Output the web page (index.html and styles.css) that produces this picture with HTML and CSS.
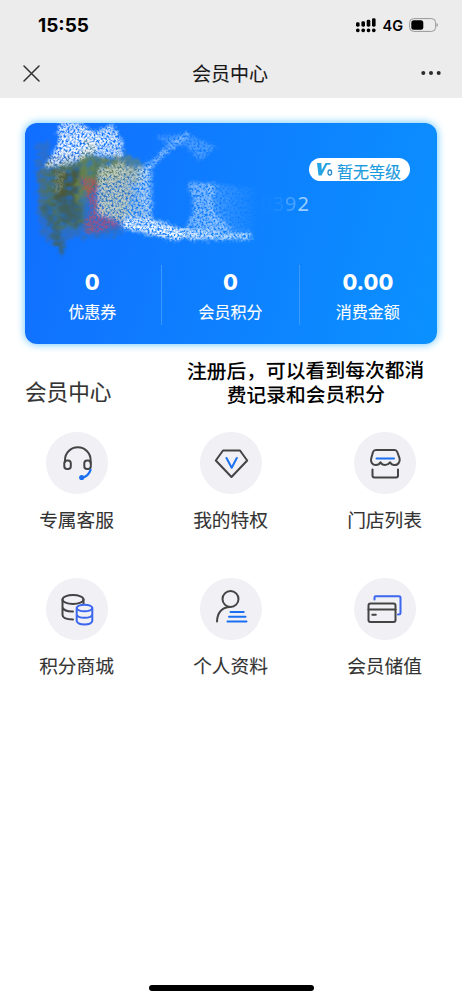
FILE: index.html
```html
<!DOCTYPE html>
<html lang="zh-CN">
<head>
<meta charset="utf-8">
<title>会员中心</title>
<link rel="stylesheet" href="styles.css">
</head>
<body>
<header class="top">
  <div class="status">
    <span class="time">15:55</span>
    <div class="status-right">
      <svg class="signal" width="20" height="15" viewBox="0 0 20 15">
        <g fill="#000"><rect x="0" y="4.3" width="3.6" height="4.4" rx="1.4"/><rect x="5.4" y="3.2" width="3.6" height="5.5" rx="1.4"/><rect x="10.7" y="1.8" width="3.6" height="6.9" rx="1.4"/><rect x="16" y=".3" width="3.6" height="8.4" rx="1.4"/>
        <rect x="0" y="10.4" width="3.6" height="3.8" rx="1.6"/><rect x="5.4" y="10.4" width="3.6" height="3.8" rx="1.6"/><rect x="10.7" y="10.4" width="3.6" height="3.8" rx="1.6"/><rect x="16" y="10.4" width="3.6" height="3.8" rx="1.6"/></g>
      </svg>
      <span class="net">4G</span>
      <svg class="battery" width="29" height="14" viewBox="0 0 29 14">
        <rect x=".6" y=".6" width="26" height="12.8" rx="4" fill="none" stroke="#999" stroke-width="1"/>
        <rect x="2.3" y="2.2" width="12" height="9.6" rx="2.5"/>
        <path d="M27.600 5v4q1.200-.5 1.200-2T27.600 5z" fill="#888"/>
      </svg>
    </div>
  </div>
  <nav class="nav">
    <svg width="17" height="17" viewBox="0 0 17 17" fill="none" stroke="#333" stroke-width="1.500" stroke-linecap="round"><path d="M1 1l15 15M16 1L1 16"/></svg>
    <h1 class="title">会员中心</h1>
    <svg width="20" height="6" viewBox="0 0 20 6" fill="#2b2b2b"><circle cx="2.300" cy="3" r="2"/><circle cx="10" cy="3" r="2"/><circle cx="17.700" cy="3" r="2"/></svg>
  </nav>
</header>
<main>
  <section class="card">
    <svg class="scribble" viewBox="25 123 412 221">
      <defs>
        <filter id="chalk" x="-20%" y="-20%" width="140%" height="140%" color-interpolation-filters="sRGB">
          <feTurbulence type="fractalNoise" baseFrequency=".5 .42" numOctaves="3" seed="7" result="n"/>
          <feColorMatrix in="n" values="0 0 0 0 0  0 0 0 0 0  0 0 0 0 0  3 0 0 0 -.8" result="a"/>
          <feDisplacementMap in="SourceGraphic" in2="n" scale="12" xChannelSelector="G" yChannelSelector="B" result="d"/>
          <feGaussianBlur in="d" stdDeviation=".8" result="s"/>
          <feComposite in="s" in2="a" operator="in"/>
          <feGaussianBlur stdDeviation=".4"/>
        </filter>
        <filter id="smear" x="-20%" y="-20%" width="140%" height="140%" color-interpolation-filters="sRGB">
          <feTurbulence type="fractalNoise" baseFrequency=".15 .3" numOctaves="4" seed="3" result="n"/>
          <feColorMatrix in="n" values="0 0 0 0 0  0 0 0 0 0  0 0 0 0 0  2 0 0 0 -.1" result="a"/>
          <feDisplacementMap in="SourceGraphic" in2="n" scale="18" xChannelSelector="R" yChannelSelector="G" result="d"/>
          <feComposite in="d" in2="a" operator="in"/>
          <feGaussianBlur stdDeviation=".9"/>
        </filter>
        <linearGradient id="fade" x1="0" x2="1"><stop offset="0" stop-color="#cfe4ff" stop-opacity=".35"/><stop offset="1" stop-color="#9cc8ff" stop-opacity=".02"/></linearGradient>
      </defs>
      <g filter="url(#smear)">
        <path d="M38 164L60 152L128 158L138 168L124 222L118 236L70 238L62 250L42 238L36 200z" fill="#4c6a8a" opacity=".5"/>
        <path d="M40 165L118 156L120 172L84 196L84 224L60 230L40 210z" fill="#56703f" opacity=".75"/>
        <path d="M54 170h30l-4 28-24 6z" fill="#4b5530" opacity=".85"/>
        <path d="M58 198h22v26h-20z" fill="#3f5c5c" opacity=".8"/>
        <path d="M82 146l14-4 1 34-15 30-6-8z" fill="#6b8648" opacity=".8"/>
        <path d="M98 158l24-6 24 12-6 18-40-6z" fill="#71895f" opacity=".6"/>
        <path d="M42 205l6-3 18 46-6 8z" fill="#3d6470"/>
        <path d="M38 145l12-6-4 64-8 6z" fill="#4470a0" opacity=".5"/>
      </g>
      <g filter="url(#chalk)">
        <path d="M44 168L58 144L58 123L76 121L94 132L112 124L123 142L122 158L90 155L72 164z" fill="#eef4ff" opacity=".85"/>
        <path d="M60 137L82 128L112 141L88 152L56 157z" fill="#fff" opacity=".6"/>
        <path d="M80 178L97 178L98 203L120 222L108 230L86 234L84 222L92 212z" fill="#d9484f" opacity=".6"/>
        <path d="M90 212L118 218L122 226L96 233z" fill="#8654a4" opacity=".5"/>
        <path d="M54 172L66 168L62 192L54 194z" fill="#a9b58a" opacity=".4"/>
        <path d="M97 168L123 165L148 169L150 220L125 225L97 214z" fill="#d8ded0" opacity=".7"/>
        <path d="M101 168L124 160L132 222L100 214z" fill="#cbd2b4" opacity=".6"/>
        <path d="M123 217L152 218L180 228L208 230L228 229L206 234L178 240L150 235L122 228z" fill="#eef6ff" opacity=".85"/>
        <path d="M124 225L178 238M150 224L182 234" fill="none" stroke="#fff" stroke-width="6" opacity=".75"/>
        <path d="M136 170L152 160L153 216L143 218z" fill="#bddcff" opacity=".6"/>
        <path d="M144 174L162 154L188 133" fill="none" stroke="#c4dfff" stroke-width="5" opacity=".65"/>
        <path d="M157 136L186 134L216 146L200 162L186 146L168 146z" fill="#8dc0ff" opacity=".45"/>
        <path d="M188 183L214 183L212 208L224 222L236 232L186 228L192 213L193 204z" fill="#c8dfff" opacity=".6"/>
        <path d="M208 183L258 188L254 233L210 230z" fill="url(#fade)"/>
        <path d="M190 236.500L251 236" stroke="#d5e8ff" stroke-width="7" opacity=".9"/>
      </g>
    </svg>
    <div class="badge">
      <svg width="17" height="15" viewBox="0 0 17 15"><path d="M0 1h4.300l.5 7L8.500 1H14l-1.200 1.800H10L4.600 13.500H1.500z" fill="#25a3e3"/><ellipse cx="12.800" cy="10.500" rx="1.800" ry="2.500" fill="none" stroke="#2389c8" stroke-width="1.300"/></svg>
      <span>暂无等级</span>
    </div>
    <div class="phone"><i class="p1">0</i><i class="p2">3</i><i class="p3">9</i><i class="p4">2</i></div>
    <div class="stats">
      <div class="stat"><b>0</b><span>优惠券</span></div>
      <div class="stat"><b>0</b><span>会员积分</span></div>
      <div class="stat"><b>0.00</b><span>消费金额</span></div>
    </div>
  </section>
  <div class="heading">
    <h2 class="section-title">会员中心</h2>
    <p class="note">注册后，可以看到每次都消<br>费记录和会员积分</p>
  </div>
  <section class="menu">
    <a class="item"><span class="disc"><svg viewBox="0 0 62 62">
      <path d="M19 30V28a12.800 12.800 0 0 1 25.600 0v3"/><rect x="18.300" y="28.500" width="6.500" height="8.500" rx="2.800"/><rect x="38.300" y="28.500" width="6.500" height="8.500" rx="2.800"/><path class="blue thick" d="M44.500 38q-2 6.500-8.500 7.500"/><circle cx="35.700" cy="45.500" r="2.600" class="dot"/></svg></span><span>专属客服</span></a>
    <a class="item"><span class="disc"><svg viewBox="0 0 62 62"><path d="M23 18.500H40L47.200 28.500L31.500 45L15.800 28.500z"/><path class="blue" d="M26.500 26l5.200 9.800 5.100-9.800"/></svg></span><span>我的特权</span></a>
    <a class="item"><span class="disc"><svg viewBox="0 0 62 62"><path d="M22 18H40.500Q42.600 18 43.300 20L45.600 26.500C46.500 30 43.500 33.500 40.500 33Q37.500 33 36 30.300Q34 33 31 33Q28 33 26.500 30.300Q25 33 21.800 33C18.500 33 16.200 30 17.200 26.500L19 20Q19.700 18 22 18z"/><path class="blue" d="M22.500 26.500h17.500"/><path d="M18.500 37.500v6q0 2 2 2H42q2 0 2-2v-6"/></svg></span><span>门店列表</span></a>
    <a class="item"><span class="disc"><svg viewBox="0 0 62 62"><ellipse cx="27" cy="21.500" rx="10.500" ry="4.500"/><path d="M16.500 21.500V37q0 4.300 10.500 4.500M37.500 21.500V26M16.500 29.500q2 4.300 10.500 4"/><g class="indigo"><ellipse cx="38.500" cy="30" rx="7.800" ry="3.300"/><path d="M30.700 30v13q1 3.500 7.800 3.500T46.300 43V30M30.700 36.500q1 3.300 7.800 3.300t7.800-3.300"/></g></svg></span><span>积分商城</span></a>
    <a class="item"><span class="disc"><svg viewBox="0 0 62 62"><circle cx="30.500" cy="21" r="8"/><path d="M17 43.500Q17.500 30.500 29 29"/><path class="blue" d="M30.500 34h13.200M29 38.700h16.500M27.500 43.500h19"/></svg></span><span>个人资料</span></a>
    <a class="item"><span class="disc"><svg viewBox="0 0 62 62"><path class="indigo" d="M20.500 21.500V19.500q0-1.200 1.200-1.200H45q1.500 0 1.500 1.500V35q0 1.500-2.500 1.500"/><rect x="14.500" y="25.500" width="27" height="18.500" rx="2"/><path d="M14.500 31.500h27M18.300 36.800h3.500"/></svg></span><span>会员储值</span></a>
  </section>
</main>
<footer class="home"><span class="bar"></span></footer>
</body>
</html>
```

FILE: styles.css
```css
* { box-sizing: border-box; }
body { margin: 0; width: 462px; height: 1000px; overflow: hidden; background: #fff; color: #333; font-family: "Noto Sans CJK SC", sans-serif; display: flex; flex-direction: column; }
h1, h2, p { margin: 0; font-weight: 400; }
main { flex: 1; }
.top { height: 98px; background: #ececec; }
.status { height: 50px; padding: 0 24px 0 38px; display: flex; align-items: center; justify-content: space-between; }
.time { font: 700 19px "Inter", sans-serif; color: #000; }
.status-right { display: flex; align-items: center; }
.net { font: 600 14.500px "Inter", sans-serif; color: #000; margin: 0 6px 0 6px; }
.nav { height: 46px; padding: 0 21px 0 23px; display: flex; align-items: center; justify-content: space-between; }
.title { font-size: 19px; line-height: 28px; color: #181818; padding-right: 1px; -webkit-text-stroke: .1px; }
.card { position: relative; margin: 25px 25px 0; height: 221px; border-radius: 12px; background: linear-gradient(105deg, #116eff, #0b91ff); box-shadow: 0 0 8px #5cc3ff; display: flex; flex-direction: column; padding-top: 35px; color: #fff; }
.scribble { position: absolute; inset: 0; width: 412px; height: 221px; overflow: visible; }
.badge { align-self: flex-end; margin-right: 27px; width: 101px; height: 23px; border-radius: 12px; background: #fff; display: flex; align-items: center; padding-left: 8px; gap: 4px; color: #1c9ade; font-size: 16px; line-height: 23px; }
.badge span { padding-top: 3px; margin-left: -1px; -webkit-text-stroke: .15px; }
.phone { align-self: flex-end; margin: 10px 127px 0 0; display: flex; font: 20px/26px "Noto Sans", sans-serif; color: #9dceff; letter-spacing: 1px; }
.phone i { font-style: normal; }
.p1 { opacity: .03; }
.p2 { opacity: .12; }
.p3 { opacity: .4; }
.stats { display: grid; grid-template-columns: repeat(3, 1fr); margin: 48px 1px 0 -1px; height: 60px; }
.stat { display: flex; flex-direction: column; align-items: center; }
.stat + .stat { border-left: 1px solid #3b9aff; }
.stat:first-child { padding-right: 1px; }
.stat b { font: 800 21.500px/32px "Inter", sans-serif; padding-top: 1px; }
.stat span { font-size: 16px; line-height: 24px; padding-top: 1px; -webkit-text-stroke: .1px; }
.heading { display: flex; justify-content: space-between; height: 88px; padding: 0 38px 0 25px; }
.section-title { font-size: 21.6px; line-height: 32px; padding-top: 31px; -webkit-text-stroke: .15px; }
.note { font-size: 19.800px; line-height: 24px; font-weight: 500; color: #000; text-align: center; padding-top: 14px; transform: rotate(-.4deg); }
.menu { display: grid; grid-template-columns: repeat(3, 154px); grid-auto-rows: 145.500px; }
.item { display: flex; flex-direction: column; align-items: center; font-size: 18.700px; line-height: 28px; }
.item > span:last-child { margin-right: 1px; -webkit-text-stroke: .1px; }
.disc { width: 62px; height: 62px; border-radius: 50%; background: #f0f0f5; margin-bottom: 11px; }
.disc svg { display: block; width: 62px; height: 62px; fill: none; stroke: #444; stroke-width: 2; stroke-linecap: round; stroke-linejoin: round; }
.disc .blue { stroke: #1b70f2; }
.disc .thick { stroke-width: 2.4; }
.disc .indigo { stroke: #3b66ee; }
.disc .dot { fill: #1b70f2; stroke: none; }
.home { height: 15px; display: flex; justify-content: center; }
.bar { width: 165px; height: 6px; border-radius: 3px; background: #000; }
```
